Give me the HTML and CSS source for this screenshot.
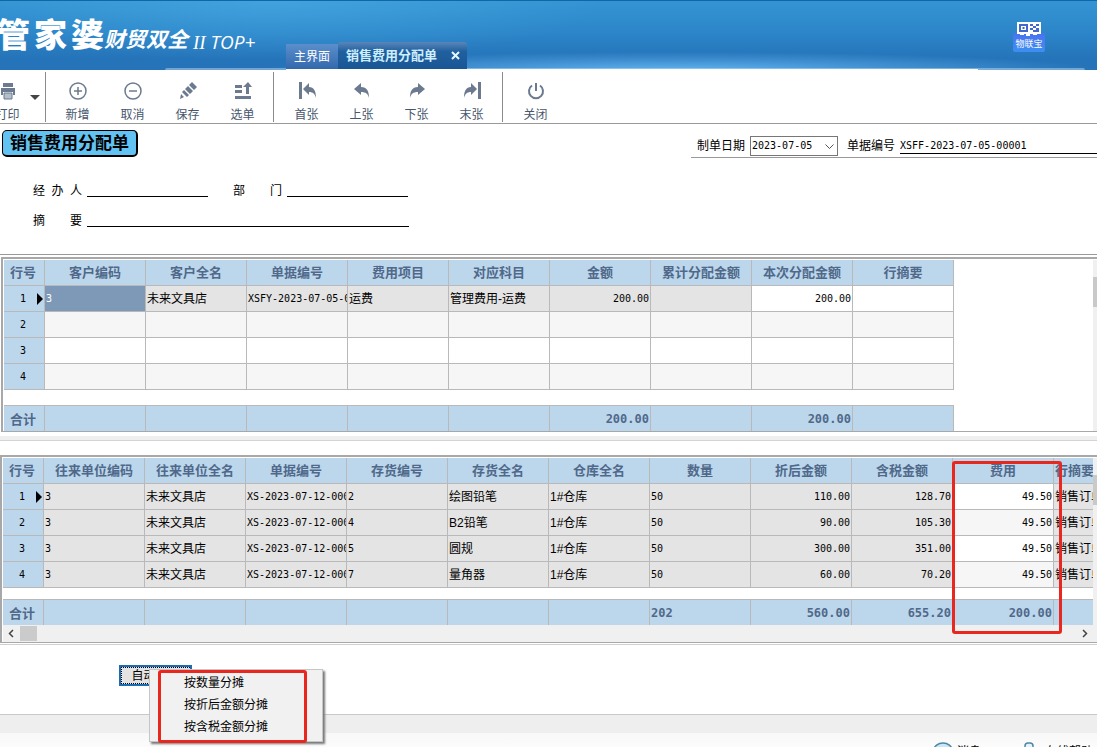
FILE: index.html
```html
<!DOCTYPE html>
<html lang="zh-CN">
<head>
    <meta charset="UTF-8">
    <meta name="viewport" content="width=device-width, initial-scale=1.0">
    <title>销售费用分配单</title>
    <link rel="stylesheet" href="styles.css">
</head>
<body>
    <header class="banner">
        <div class="logo">
            <span class="logo-main"><b>管</b><b>家</b><b>婆</b></span>
            <span class="logo-sub">财贸双全</span>
            <span class="logo-ver"><i>II</i> TOP+</span>
        </div>
        <nav class="tabs">
            <a class="tab" href="#">主界面</a>
            <a class="tab active" href="#doc">销售费用分配单 <svg width="9" height="9" viewBox="0 0 9 9"><path d="M1 1L8 8M8 1L1 8" stroke="#e4f6ff" stroke-width="2"/></svg></a>
        </nav>
        <a class="iot" href="#">
            <svg width="26" height="15" viewBox="0 0 26 15">
                <rect x="1" y="0" width="24" height="12" fill="#fff"/>
                <path d="M4 3h7v6h-7z" fill="none" stroke="#4168cc" stroke-width="2"/>
                <path d="M6.500 5h2v2h-2zM14 2h3v2h-3zM20 2h3v2h-3zM17 4h3v2h-3zM14 6h3v2h-3zM20 6h3v4h-3zM17 8h3v2h-3z" fill="#4168cc"/>
                <path d="M4 12h4v1h-4zM10 12h4v2h-4zM17 12h4v1h-4z" fill="#fff"/>
            </svg>
            <span>物联宝</span>
        </a>
    </header>

    <div class="toolbar">
        <button class="tool">
            <svg width="20" height="20" viewBox="0 0 20 20"><path d="M5 2h10v4H5zM3 7h14v7h-2v-3H5v3H3z" fill="#6b7a8f"/><path d="M6 12h8v6H6z" fill="#b4bfcc" stroke="#6b7a8f"/></svg>
            打印
        </button>
        <button class="more" aria-label="更多"><svg width="10" height="5" viewBox="0 0 10 5"><path d="M0 0h10L5 5z" fill="#444"/></svg></button>
        <span class="sep"></span>
        <button class="tool">
            <svg width="20" height="20" viewBox="0 0 20 20"><circle cx="10" cy="10" r="8" fill="none" stroke="#6b7a8f" stroke-width="1.500"/><path d="M6 10h8M10 6v8" stroke="#6b7a8f" stroke-width="1.500"/></svg>
            新增
        </button>
        <button class="tool">
            <svg width="20" height="20" viewBox="0 0 20 20"><circle cx="10" cy="10" r="8" fill="none" stroke="#6b7a8f" stroke-width="1.500"/><path d="M6 10h8" stroke="#6b7a8f" stroke-width="1.500"/></svg>
            取消
        </button>
        <button class="tool">
            <svg width="20" height="20" viewBox="0 0 20 20"><path d="M14 1l5 5-3 3-5-5zM10 5l5 5-3 3-5-5zM6 9l5 5-2 2-5-5zM3 13l3 3-4 2z" fill="#6b7a8f"/></svg>
            保存
        </button>
        <button class="tool">
            <svg width="20" height="20" viewBox="0 0 20 20"><path d="M2 4h7v3H2zM2 9h7v3H2zM2 15h16v3H2zM13 13V6h-3l5-5 4 5h-3v7z" fill="#6b7a8f"/></svg>
            选单
        </button>
        <span class="sep"></span>
        <button class="tool">
            <svg width="20" height="20" viewBox="0 0 20 20"><path d="M2 1h3v17H2zM6 8l6-6v4c5 0 7 4 7 11-1-4-3-6-7-6v3z" fill="#6b7a8f"/></svg>
            首张
        </button>
        <button class="tool">
            <svg width="20" height="20" viewBox="0 0 20 20"><path d="M2 8l7-6v4c6 0 8 4 8 11-1-4-3-6-8-6v3z" fill="#6b7a8f"/></svg>
            上张
        </button>
        <button class="tool">
            <svg width="20" height="20" viewBox="0 0 20 20"><path d="M18 8l-7-6v4c-6 0-8 4-8 11 1-4 3-6 8-6v3z" fill="#6b7a8f"/></svg>
            下张
        </button>
        <button class="tool">
            <svg width="20" height="20" viewBox="0 0 20 20"><path d="M16 1h3v17h-3zM15 8l-6-6v4c-5 0-7 4-7 11 1-4 3-6 7-6v3z" fill="#6b7a8f"/></svg>
            末张
        </button>
        <span class="sep"></span>
        <button class="tool">
            <svg width="20" height="20" viewBox="0 0 20 20"><path d="M10 2v8M6 4.500a7 7 0 1 0 8 0" fill="none" stroke="#6b7a8f" stroke-width="2"/></svg>
            关闭
        </button>
    </div>

    <section class="doc" id="doc">
        <div class="doc-top">
            <h1>销售费用分配单</h1>
            <div class="doc-meta">
                <label for="date">制单日期</label>
                <span class="combo">
                    <select id="date"><option>2023-07-05</option></select>
                    <svg width="9" height="6" viewBox="0 0 9 6"><path d="M.5 .5l4 4 4-4" fill="none" stroke="#555"/></svg>
                </span>
                <label for="code">单据编号</label>
                <input id="code" type="text" value="XSFF-2023-07-05-00001">
            </div>
        </div>
        <div class="fields">
            <div class="field-row">
                <label for="handler">经 办 人</label>
                <input id="handler" class="line" type="text">
                <label for="dept" class="second">部 门</label>
                <input id="dept" class="line" type="text">
            </div>
            <div class="field-row">
                <label for="summary">摘 要</label>
                <input id="summary" class="line long" type="text">
            </div>
        </div>
    </section>

    <div class="panel first">
        <div class="grid-wrap">
            <table class="grid">
                <colgroup><col class="c-no"><col span="9" class="c"></colgroup>
                <thead>
                    <tr><th>行号</th><th>客户编码</th><th>客户全名</th><th>单据编号</th><th>费用项目</th><th>对应科目</th><th>金额</th><th>累计分配金额</th><th>本次分配金额</th><th>行摘要</th></tr>
                </thead>
                <tbody>
                    <tr class="ro"><th class="current">1</th><td class="code selected">3</td><td>未来文具店</td><td class="code">XSFY-2023-07-05-00001</td><td>运费</td><td>管理费用-运费</td><td class="num">200.00</td><td></td><td class="num edit">200.00</td><td class="edit"></td></tr>
                    <tr><th>2</th><td></td><td></td><td></td><td></td><td></td><td></td><td></td><td></td><td></td></tr>
                    <tr><th>3</th><td></td><td></td><td></td><td></td><td></td><td></td><td></td><td></td><td></td></tr>
                    <tr><th>4</th><td></td><td></td><td></td><td></td><td></td><td></td><td></td><td></td><td></td></tr>
                </tbody>
            </table>
            <table class="grid total">
                <colgroup><col class="c-no"><col span="9" class="c"></colgroup>
                <tbody>
                    <tr><th>合计</th><td></td><td></td><td></td><td></td><td></td><td class="num">200.00</td><td></td><td class="num">200.00</td><td></td></tr>
                </tbody>
            </table>
        </div>
        <div class="vscroll"><i></i></div>
    </div>

    <div class="splitter"></div>

    <div class="panel second-panel">
        <div class="grid-wrap">
            <table class="grid">
                <colgroup><col class="c-no"><col span="11" class="c"></colgroup>
                <thead>
                    <tr><th>行号</th><th>往来单位编码</th><th>往来单位全名</th><th>单据编号</th><th>存货编号</th><th>存货全名</th><th>仓库全名</th><th>数量</th><th>折后金额</th><th>含税金额</th><th>费用</th><th class="cut">行摘要</th></tr>
                </thead>
                <tbody>
                    <tr class="ro"><th class="current">1</th><td class="code">3</td><td>未来文具店</td><td class="code">XS-2023-07-12-00001</td><td class="code">2</td><td>绘图铅笔</td><td>1#仓库</td><td class="code">50</td><td class="num">110.00</td><td class="num">128.70</td><td class="num edit">49.50</td><td>销售订单</td></tr>
                    <tr class="ro"><th>2</th><td class="code">3</td><td>未来文具店</td><td class="code">XS-2023-07-12-00001</td><td class="code">4</td><td>B2铅笔</td><td>1#仓库</td><td class="code">50</td><td class="num">90.00</td><td class="num">105.30</td><td class="num edit">49.50</td><td>销售订单</td></tr>
                    <tr class="ro"><th>3</th><td class="code">3</td><td>未来文具店</td><td class="code">XS-2023-07-12-00001</td><td class="code">5</td><td>圆规</td><td>1#仓库</td><td class="code">50</td><td class="num">300.00</td><td class="num">351.00</td><td class="num edit">49.50</td><td>销售订单</td></tr>
                    <tr class="ro"><th>4</th><td class="code">3</td><td>未来文具店</td><td class="code">XS-2023-07-12-00001</td><td class="code">7</td><td>量角器</td><td>1#仓库</td><td class="code">50</td><td class="num">60.00</td><td class="num">70.20</td><td class="num edit">49.50</td><td>销售订单</td></tr>
                </tbody>
            </table>
            <table class="grid total">
                <colgroup><col class="c-no"><col span="11" class="c"></colgroup>
                <tbody>
                    <tr><th>合计</th><td></td><td></td><td></td><td></td><td></td><td></td><td class="code">202</td><td class="num">560.00</td><td class="num">655.20</td><td class="num">200.00</td><td></td></tr>
                </tbody>
            </table>
            <div class="hscroll">
                <svg width="6" height="9" viewBox="0 0 6 9"><path d="M5 1L1.500 4.500 5 8" fill="none" stroke="#444" stroke-width="1.500"/></svg>
                <i></i>
                <svg width="6" height="9" viewBox="0 0 6 9"><path d="M1 1l3.500 3.500L1 8" fill="none" stroke="#444" stroke-width="1.500"/></svg>
            </div>
        </div>
        <div class="vscroll"><i></i></div>
        <div class="mark mark-fee"></div>
    </div>

    <div class="actions">
        <div class="split">
            <button class="auto">自动分摊</button>
            <div class="menu">
                <button>按数量分摊</button>
                <button>按折后金额分摊</button>
                <button>按含税金额分摊</button>
                <div class="mark mark-menu"></div>
            </div>
        </div>
    </div>

    <div class="strip"></div>
    <footer class="status">
        <a href="#"><svg width="20" height="16" viewBox="0 0 20 16"><ellipse cx="10" cy="8" rx="9" ry="7" fill="#c9e8f5" stroke="#4d87a5" stroke-width="1.500"/></svg>消息</a>
        <a href="#" class="help"><svg width="12" height="16" viewBox="0 0 12 16"><rect x="2" y="1" width="8" height="9" rx="3" fill="#e4f4fa" stroke="#4d87a5" stroke-width="1.500"/><path d="M1 15c0-6 10-6 10 0" fill="#c9e8f5" stroke="#4d87a5"/></svg>在线帮助</a>
    </footer>
</body>
</html>
```
FILE: styles.css
```css
* {
    box-sizing: border-box;
}
body {
    margin: 0;
    height: 100vh;
    overflow: hidden;
    background: #fff;
    color: #000;
    font: 12px/16px "Liberation Sans", "Noto Sans CJK SC", sans-serif;
}
a {
    color: inherit;
    text-decoration: none;
}
button, input, select {
    font: inherit;
    color: inherit;
    padding: 0;
    border: 0;
    border-radius: 0;
    background: none;
}
svg {
    display: block;
    flex: none;
}

/* banner */
.banner {
    position: relative;
    display: flex;
    height: 70px;
    border-top: 1px solid #0f67a8;
    background:
        radial-gradient(ellipse 38% 18px at 62% 100%, #5fb2ee, transparent),
        radial-gradient(ellipse 30% 60px at 25% 0, rgba(90, 190, 240, .35), transparent),
        linear-gradient(#3494d3, #2c86c9 45%, #2573b9 85%, #2673b8);
}
.banner::before {
    content: "";
    position: absolute;
    left: 165px;
    right: 12px;
    bottom: 0;
    height: 2px;
    border-radius: 8px 8px 0 0;
    background: rgba(190, 215, 240, .5);
}
.logo {
    display: flex;
    flex: none;
    width: 286px;
    color: #fff;
    white-space: nowrap;
}
.logo-main {
    display: flex;
    gap: 4px;
    margin-left: -3px;
    font: 900 33px/64px "Noto Sans CJK SC", sans-serif;
}
.logo-sub {
    font: italic bold 21px/74px "Noto Sans CJK SC", sans-serif;
}
.logo-ver {
    margin-left: 5px;
    font: italic 19px/82px "Open Sans", sans-serif;
}
.logo-ver i {
    font-family: "Liberation Serif", serif;
}
.tabs {
    position: relative;
    display: flex;
    align-items: flex-end;
    flex: 1;
    margin-right: 35px;
    border-bottom: 1px solid #fff;
}
.tab {
    display: flex;
    align-items: center;
    height: 25px;
    padding: 0 8px;
    color: #fff;
    background: linear-gradient(#5a8fcc, #3468ad);
}
.tab.active {
    gap: 14px;
    height: 27px;
    padding: 0 7px 0 8px;
    border-radius: 3px 3px 0 0;
    font-weight: bold;
    font-size: 13px;
    color: #cdeeff;
    background: linear-gradient(#5a86b8, #20609f 35%, #1a5695);
}
.iot {
    display: flex;
    flex-direction: column;
    align-items: center;
    width: 32px;
    margin: 21px 52px 0 0;
}
.iot svg {
    position: relative;
    z-index: 1;
}
.iot span {
    width: 32px;
    height: 19px;
    margin-top: -4px;
    border-radius: 2px;
    background: linear-gradient(#4a72f0, #3d8ff0);
    color: #fff;
    font-size: 9px;
    line-height: 22px;
    text-align: center;
}

/* toolbar */
.toolbar {
    display: flex;
    height: 54px;
    padding-top: 2px;
    margin-left: -20px;
    border-bottom: 1px solid #999;
    background: #fff;
}
.tool {
    display: flex;
    flex-direction: column;
    align-items: center;
    gap: 6px;
    width: 55px;
    padding-top: 9px;
    color: #47566c;
}
.more {
    display: flex;
    align-items: center;
    width: 7px;
    margin: 0 5px 0 -5px;
}
.sep {
    width: 1px;
    height: 50px;
    margin: 0 4px 0 3px;
    background: #8c8c8c;
}
.tool + .sep {
    margin-right: 5px;
}

/* document head */
.doc {
    height: 131px;
    border-bottom: 1px solid #999;
}
.doc-top {
    display: flex;
    justify-content: space-between;
    align-items: flex-start;
    padding-left: 2px;
}
.doc h1 {
    margin: 6px 0 0;
    padding: 1px 7px 0;
    border: 1px solid #000;
    border-width: 1px 2px 2px 1px;
    border-radius: 5px;
    background: #62c3f2;
    font-size: 17px;
    line-height: 23px;
}
.doc-meta {
    display: flex;
    align-items: center;
    width: 406px;
    height: 34px;
    padding: 10px 0 0 6px;
    border-bottom: 1px solid #999;
}
.combo {
    position: relative;
    margin: 0 9px 0 5px;
}
.combo select {
    display: block;
    width: 88px;
    height: 20px;
    padding-left: 1px;
    border: 1px solid #777;
    appearance: none;
    background: #fff;
    font: 10px "DejaVu Sans Mono", monospace;
}
.combo svg {
    position: absolute;
    right: 4px;
    top: 8px;
    pointer-events: none;
}
.doc-meta input {
    flex: 1;
    min-width: 0;
    height: 16px;
    margin-left: 5px;
    border-bottom: 1px solid #000;
    font: 10px "DejaVu Sans Mono", monospace;
}
.fields {
    display: grid;
    gap: 14px;
    padding: 24px 0 0 33px;
}
.field-row {
    display: flex;
}
.field-row label {
    width: 49px;
    line-height: 18px;
    text-align-last: justify;
}
.field-row .second {
    margin-left: 25px;
}
.line {
    width: 121px;
    height: 15px;
    margin-left: 5px;
    border-bottom: 1px solid #000;
}
.line.long {
    width: 322px;
}
.fields {
    gap: 12px;
}

/* grids */
.panel {
    position: relative;
    display: flex;
    border: 1px solid #a8a8a8;
    border-width: 2px 0 1px 2px;
}
.panel.first {
    margin: 2px 0 0 1px;
    padding: 1px 0 0 1px;
}
.second-panel {
    margin-top: 14px;
    padding: 1px 0 0 1px;
}
.grid-wrap {
    flex: 1;
    min-width: 0;
    overflow: hidden;
}
.grid {
    table-layout: fixed;
    width: 0;
    border-spacing: 0;
}
.c-no {
    width: 41px;
}
.c {
    width: 101px;
}
.grid th, .grid td {
    height: 26px;
    padding: 0 1px;
    border: 1px solid #b9b9b9;
    border-width: 0 1px 1px 0;
    overflow: hidden;
    white-space: nowrap;
    text-align: left;
}
.grid th {
    background: #bcd7ec;
    text-align: center;
    font-weight: normal;
}
.grid thead th {
    color: #50698a;
    font-size: 13px;
    font-weight: bold;
}
.grid thead th:first-child {
    padding-right: 3px;
}
.grid thead th.cut {
    text-align: left;
}
.grid tbody th {
    position: relative;
    padding-right: 3px;
    font: 10px "DejaVu Sans Mono", monospace;
}
.grid .current::after {
    content: "";
    position: absolute;
    right: 1px;
    top: 7px;
    border: 6px solid transparent;
    border-left-color: #000;
    border-right: 0;
}
.grid tr:nth-child(even) td {
    background: #f6f6f6;
}
.grid tr.ro td {
    background: #e4e4e4;
}
.grid tr.ro td.edit {
    background: #fff;
}
.grid tr.ro:nth-child(even) td.edit {
    background: #f6f6f6;
}
.grid tr.ro td.selected {
    background: #7e99b7;
    color: #fff;
}
.grid .code, .grid .num {
    font: 10px "DejaVu Sans Mono", monospace;
}
.grid .num {
    text-align: right;
}
.grid.total {
    margin-top: 15px;
}
.second-panel .total {
    margin-top: 11px;
}
.grid.total th, .grid.total td {
    border-width: 1px 1px 0 0;
    background: #bcd7ec;
    color: #50698a;
    font-size: 12px;
    font-weight: bold;
}
.grid.total th {
    font-family: "Noto Sans CJK SC", sans-serif;
    font-size: 13px;
    line-height: 16px;
}
.vscroll {
    flex: none;
    width: 4px;
    padding-top: 17px;
    background: #f0f0f0;
}
.vscroll i {
    display: block;
    height: 30px;
    background: #c9c9c9;
}
.hscroll {
    display: flex;
    align-items: center;
    height: 17px;
    padding: 0 5px;
    background: #f0f0f0;
}
.hscroll i {
    width: 17px;
    height: 15px;
    margin: 0 auto 0 6px;
    background: #cbcbcb;
}
.splitter {
    height: 5px;
    margin-top: 4px;
    border-bottom: 1px solid #d4d4d4;
    background: #efefef;
}
.mark {
    position: absolute;
    border: 3px solid #e8281e;
    border-radius: 3px;
}
.mark-fee {
    left: 950px;
    top: 4px;
    width: 110px;
    height: 173px;
}

/* bottom */
.actions {
    height: 70px;
    margin-top: 1px;
    padding: 20px 0 0 119px;
    border-top: 1px solid #d0d0d0;
}
.split {
    position: relative;
    width: 73px;
}
.auto {
    display: block;
    width: 73px;
    height: 21px;
    border: 2px solid #1c6cb4;
    outline: 1px dotted #000;
    outline-offset: -3px;
    background: #e3e3e3;
}
.menu {
    position: absolute;
    left: 30px;
    top: 4px;
    z-index: 2;
    width: 174px;
    padding: 2px 0 3px;
    border: 1px solid #c6c6c6;
    background: #f1f1f1;
    box-shadow: 2px 2px 2px #777;
}
.menu button {
    display: block;
    width: 100%;
    height: 22px;
    padding-left: 34px;
    text-align: left;
}
.mark-menu {
    left: 8px;
    top: 0;
    width: 149px;
    height: 73px;
    pointer-events: none;
}
.strip {
    height: 19px;
    border-top: 1px solid #c8c8c8;
    background: #eee;
}
.status {
    display: flex;
    justify-content: flex-end;
    gap: 42px;
    height: 30px;
    padding: 9px 4px 0 0;
    background: linear-gradient(#f8f8f8, #fff);
}
.status a {
    display: flex;
    gap: 4px;
    line-height: 20px;
}
.status .help {
    gap: 10px;
}
```
